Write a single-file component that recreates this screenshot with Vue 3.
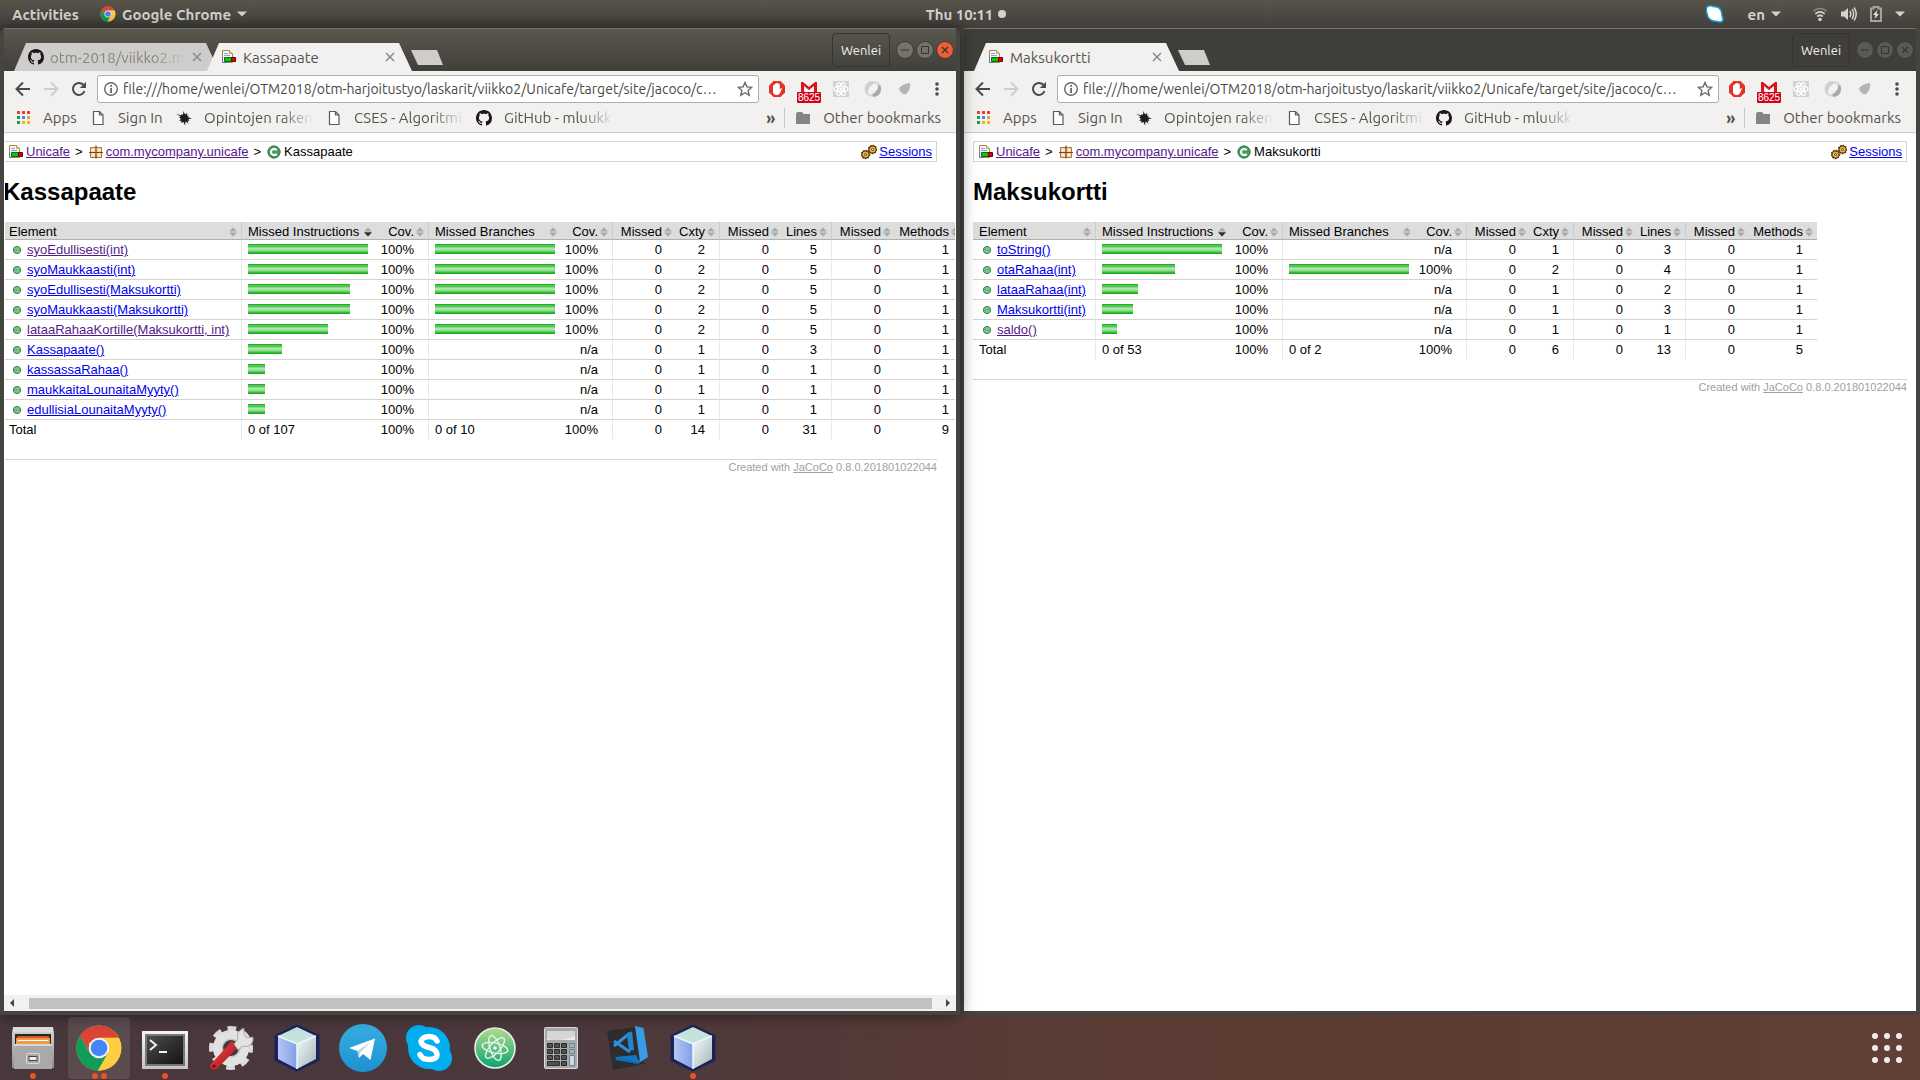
<script setup>
const columns = [
  { label: 'Element', kind: 'name' },
  { label: 'Missed Instructions', kind: 'bar', sorted: true },
  { label: 'Cov.', kind: 'num' },
  { label: 'Missed Branches', kind: 'bar' },
  { label: 'Cov.', kind: 'num' },
  { label: 'Missed', kind: 'num lead' },
  { label: 'Cxty', kind: 'num' },
  { label: 'Missed', kind: 'num lead' },
  { label: 'Lines', kind: 'num' },
  { label: 'Missed', kind: 'num lead' },
  { label: 'Methods', kind: 'num' },
]
const colClasses = ['bar-a', 'cov-a', 'bar-b', 'cov-b', 'missed', 'cxty', 'missed', 'lines', 'missed', 'methods']

// name, visited, instruction bar, branch bar, complexity, lines
const row = (name, visited, ins, br, cxty, lines) => ({
  name, visited, ins, br, cells: [br ? '100%' : 'n/a', 0, cxty, 0, lines, 0, 1],
})

const windows = [
  {
    title: 'Kassapaate',
    focused: true,
    scrolled: true,
    tabs: [
      { title: 'otm-2018/viikko2.m', icon: 'github', active: false },
      { title: 'Kassapaate', icon: 'report', active: true },
    ],
    rows: [
      row('syoEdullisesti(int)', true, 120, 120, 2, 5),
      row('syoMaukkaasti(int)', false, 120, 120, 2, 5),
      row('syoEdullisesti(Maksukortti)', false, 102, 120, 2, 5),
      row('syoMaukkaasti(Maksukortti)', false, 102, 120, 2, 5),
      row('lataaRahaaKortille(Maksukortti, int)', true, 80, 120, 2, 5),
      row('Kassapaate()', false, 34, 0, 1, 3),
      row('kassassaRahaa()', false, 17, 0, 1, 1),
      row('maukkaitaLounaitaMyyty()', false, 17, 0, 1, 1),
      row('edullisiaLounaitaMyyty()', false, 17, 0, 1, 1),
    ],
    total: ['0 of 107', '100%', '0 of 10', '100%', 0, 14, 0, 31, 0, 9],
  },
  {
    title: 'Maksukortti',
    focused: false,
    scrolled: false,
    tabs: [{ title: 'Maksukortti', icon: 'report', active: true }],
    rows: [
      row('toString()', false, 120, 0, 1, 3),
      row('otaRahaa(int)', false, 73, 120, 2, 4),
      row('lataaRahaa(int)', false, 36, 0, 1, 2),
      row('Maksukortti(int)', false, 31, 0, 1, 3),
      row('saldo()', true, 15, 0, 1, 1),
    ],
    total: ['0 of 53', '100%', '0 of 2', '100%', 0, 6, 0, 13, 0, 5],
  },
]

const url = 'file:///home/wenlei/OTM2018/otm-harjoitustyo/laskarit/viikko2/Unicafe/target/site/jacoco/c…'
const bookmarks = [
  { label: 'Apps', icon: 'apps', size: 'tiny' },
  { label: 'Sign In', icon: 'file', size: 'short' },
  { label: 'Opintojen raken', icon: 'splat', size: 'long' },
  { label: 'CSES - Algoritmi', icon: 'file', size: 'long' },
  { label: 'GitHub - mluukk', icon: 'github', size: 'long' },
]
const extensions = ['adblock', 'gmail', 'react', 'swirl', 'blob', 'kebab']
const dock = [
  { name: 'Files', icon: 'd-files', dots: 1 },
  { name: 'Google Chrome', icon: 'chrome', dots: 2, active: true },
  { name: 'Terminal', icon: 'd-terminal', dots: 1 },
  { name: 'Settings', icon: 'd-tools', dots: 0 },
  { name: 'NetBeans', icon: 'd-cube', dots: 0 },
  { name: 'Telegram', icon: 'd-telegram', dots: 0 },
  { name: 'Skype', icon: 'd-skype', dots: 0 },
  { name: 'Atom', icon: 'd-atom', dots: 0 },
  { name: 'Calculator', icon: 'd-calc', dots: 0 },
  { name: 'Visual Studio Code', icon: 'd-code', dots: 0 },
  { name: 'NetBeans IDE', icon: 'd-cube', dots: 1 },
]
</script>

<template>
  <div class="desktop">
    <svg class="defs" width="0" height="0" aria-hidden="true">
      <defs>
        <linearGradient id="g-silver" x1="0" y1="0" x2="0" y2="1"><stop offset="0" stop-color="#d8d8d8" /><stop offset="1" stop-color="#8e8e8e" /></linearGradient>
        <linearGradient id="g-light" x1="0" y1="0" x2="0" y2="1"><stop offset="0" stop-color="#f4f4f4" /><stop offset="1" stop-color="#c4c4c4" /></linearGradient>
        <linearGradient id="g-screen" x1="0" y1="0" x2="1" y2="1"><stop offset="0" stop-color="#4c4c4c" /><stop offset="1" stop-color="#141414" /></linearGradient>
        <linearGradient id="g-tele" x1="0" y1="0" x2="0" y2="1"><stop offset="0" stop-color="#37aee2" /><stop offset="1" stop-color="#1e91d0" /></linearGradient>
        <linearGradient id="g-atom" x1="0" y1="0" x2="0" y2="1"><stop offset="0" stop-color="#b5dc8c" /><stop offset="1" stop-color="#0aa371" /></linearGradient>
        <linearGradient id="g-cl" x1="0" y1="0" x2="1" y2="0"><stop offset="0" stop-color="#b4c6f5" /><stop offset="1" stop-color="#829fe6" /></linearGradient>
        <linearGradient id="g-cr" x1="0" y1="0" x2="1" y2="1"><stop offset="0" stop-color="#f2fafc" /><stop offset="1" stop-color="#a5b5b5" /></linearGradient>
        <linearGradient id="g-red" x1="0" y1="0" x2="1" y2="1"><stop offset="0" stop-color="#ee4c4c" /><stop offset="1" stop-color="#a30e14" /></linearGradient>
      </defs>
      <symbol id="chrome" viewBox="0 0 48 48">
        <circle cx="24" cy="24" r="22.5" fill="#ffcd40" />
        <path d="M24 24 4.5 12.8A22.5 22.5 0 0 1 43.6 13.4L24 13.8Z" fill="#db4437" />
        <path d="M4.5 12.8A22.5 22.5 0 0 0 23 46.5L33 29.2 24 24 15 29.2 5.5 12Z" fill="#0f9d58" />
        <path d="M5.2 11.8 15 29 14 18 24 13.8H43.6A22.5 22.5 0 0 0 5.2 11.8Z" fill="#db4437" />
        <path d="M33 29.2 23 46.5A22.5 22.5 0 0 0 43.6 13.8H24Z" fill="#ffcd40" />
        <circle cx="24" cy="24" r="10.3" fill="#f1f1f1" /><circle cx="24" cy="24" r="8.3" fill="#4285f4" />
      </symbol>
      <symbol id="github" viewBox="0 0 16 16"><path fill="#1b1817" d="M8 0C3.58 0 0 3.58 0 8c0 3.54 2.29 6.53 5.47 7.59.4.07.55-.17.55-.38 0-.19-.01-.82-.01-1.49-2.01.37-2.53-.49-2.69-.94-.09-.23-.48-.94-.82-1.13-.28-.15-.68-.52-.01-.53.63-.01 1.08.58 1.23.82.72 1.21 1.87.87 2.33.66.07-.52.28-.87.51-1.07-1.78-.2-3.64-.89-3.64-3.95 0-.87.31-1.59.82-2.15-.08-.2-.36-1.02.08-2.12 0 0 .67-.21 2.2.82.64-.18 1.32-.27 2-.27s1.36.09 2 .27c1.53-1.04 2.2-.82 2.2-.82.44 1.1.16 1.92.08 2.12.51.56.82 1.27.82 2.15 0 3.07-1.87 3.75-3.65 3.95.29.25.54.73.54 1.48 0 1.07-.01 1.93-.01 2.2 0 .21.15.46.55.38A8.01 8.01 0 0 0 16 8c0-4.42-3.58-8-8-8Z" /></symbol>
      <symbol id="report" viewBox="0 0 16 16">
        <path d="M1.5 1.5h7l3 3v9h-10z" fill="#f4f6fb" stroke="#b08a3a" /><path d="M8.5 1.5v3h3" fill="#f0d58a" stroke="#c9a24c" />
        <path d="M3 4.5h4M3 6.5h6" stroke="#8aa2d4" /><path d="M1.5 8v5.5h4" stroke="#66749b" fill="none" />
        <path d="M3.500 8.500h7v4h-7z" fill="#12c212" stroke="#0a6b0a" /><path d="M10.500 8.500h4v4h-4z" fill="#c40c0c" stroke="#700" />
      </symbol>
      <symbol id="package" viewBox="0 0 16 16"><path d="M2.500 3.500h11v10h-11z" fill="#f3d6a6" stroke="#b5733c" /><path d="M8 1.500v13M1 8.500h14" stroke="#7c4323" stroke-width="1.200" /><path d="M4 5h2.500v2H4zM10 5h2.500v2H10zM4 10h2.500v2H4zM10 10h2.500v2H10z" fill="#fbeeda" /></symbol>
      <symbol id="class" viewBox="0 0 16 16"><circle cx="8" cy="8" r="6.500" fill="#4c9c62" /><circle cx="8" cy="8" r="6" fill="none" stroke="#2f7d48" /><path d="M10.600 6.200A3.100 3.100 0 1 0 10.600 9.800" fill="none" stroke="#fff" stroke-width="2" /></symbol>
      <symbol id="sessions" viewBox="0 0 16 16">
        <g fill="#e9b545" stroke="#5a3408" stroke-width="1.200"><circle cx="4.500" cy="10.500" r="3.600" /><circle cx="11.500" cy="5.500" r="3.600" /></g>
        <g fill="none" stroke="#5a3408" stroke-width="1.200" stroke-dasharray="1.300 1.500"><circle cx="4.500" cy="10.500" r="4.200" /><circle cx="11.500" cy="5.500" r="4.200" /></g>
        <g fill="#fff4c8" stroke="#5a3408"><circle cx="4.500" cy="10.500" r="1" /><circle cx="11.500" cy="5.500" r="1" /></g>
      </symbol>
      <symbol id="method" viewBox="0 0 16 16"><circle cx="8" cy="8" r="3.600" fill="#86c486" stroke="#2f8156" /><path d="M5.500 8h5" stroke="#5fab6c" /></symbol>
      <symbol id="sort" viewBox="0 0 8 10"><path d="M4 .5 8 4.500H0z" fill="#a9a9a9" /><path d="M4 9.500 8 5.500H0z" fill="#a9a9a9" /></symbol>
      <symbol id="sort-down" viewBox="0 0 8 10"><path d="M4 .5 8 4.500H0z" fill="#a9a9a9" /><path d="M4 9.500 8 5.200H0z" fill="#3a2a20" /></symbol>
      <symbol id="apps" viewBox="0 0 16 16">
        <path d="M2 1h3v3H2zM7 1h3v3H7zM12 1h3v3h-3z" fill="#ee3e36" /><path d="M2 6h3v3H2z" fill="#16a05d" /><path d="M7 6h3v3H7z" fill="#4285f4" /><path d="M12 6h3v3h-3z" fill="#fa9d1c" />
        <path d="M2 11h3v3H2z" fill="#16a05d" /><path d="M7 11h3v3H7zM12 11h3v3h-3z" fill="#f8b21c" />
      </symbol>
      <symbol id="file" viewBox="0 0 16 16"><path d="M3.500 1.500h6l3.500 3.500v9.500H3.500zM9.500 1.500V5H13" fill="#fff" stroke="#5a5a5a" stroke-width="1.200" /></symbol>
      <symbol id="splat" viewBox="0 0 16 16"><path fill="#1d1d1d" d="m0 3.500 5 2L5.500 4 7 5l.5-4L9 4.500 11.500 3l-.5 2.500 2 .5-1.500 1L16 8.500l-3.500.5 1 2-2-.5 1 3-3-2-.5 4L7.500 12 5 13l.5-2L3 10.500l2-1.500-2-2 1.500-.5z" /></symbol>
      <symbol id="folder" viewBox="0 0 16 16"><path d="M1 3.500 2.500 2H7l1.500 2H15v10H1z" fill="#858585" /></symbol>
      <symbol id="back" viewBox="0 0 16 16"><path d="M15 8H2M8 1.500 1.500 8 8 14.500" fill="none" stroke="#4a4a4a" stroke-width="2" /></symbol>
      <symbol id="forward" viewBox="0 0 16 16"><path d="M1 8h13M8 1.500 14.500 8 8 14.500" fill="none" stroke="#cfcdcb" stroke-width="2" /></symbol>
      <symbol id="reload" viewBox="0 0 16 16"><path d="M13.500 10.200A6 6 0 1 1 12.300 3.800" fill="none" stroke="#4a4a4a" stroke-width="2" /><path d="M15 .8V7H8.800z" fill="#4a4a4a" /></symbol>
      <symbol id="info" viewBox="0 0 16 16"><circle cx="8" cy="8" r="6.300" fill="none" stroke="#6a6a6a" stroke-width="1.400" /><path d="M7.200 4h1.800v1.800H7.200zM7.200 7h1.800v5H7.200z" fill="#6a6a6a" /></symbol>
      <symbol id="star" viewBox="0 0 16 16"><path d="m8 1.500 1.900 4.400 4.800.4-3.600 3.200 1.100 4.700L8 11.700l-4.200 2.500 1.100-4.700L1.300 6.300l4.800-.4z" fill="none" stroke="#6a6a6a" stroke-width="1.400" /></symbol>
      <symbol id="adblock" viewBox="0 0 24 24"><path d="M8.500 4h7L20 8.500v7L15.500 20h-7L4 15.500v-7z" fill="#e4312c" /><path d="M8 12V8.500q.8-1 1.500 0V7q.9-1 1.700 0V6.200q.9-1 1.800 0V7q1-1 1.700 0v5.500l1.300-1.500q1 0 .8 1l-2 4.500q-1 1.500-3.500 1.500-3 0-3.300-3z" fill="#fff" /></symbol>
      <symbol id="gmail" viewBox="0 0 24 24"><path d="M4 5h16v10H4z" fill="#f6eeee" /><path d="M4 15V5h2l6 5 6-5h2v10h-3V9l-5 4-5-4v6z" fill="#d4151b" /></symbol>
      <symbol id="react" viewBox="0 0 24 24"><path d="M4 4h16v16H4z" fill="#d3d2d0" /><g fill="none" stroke="#fff" stroke-width="1.200"><ellipse cx="12" cy="12" rx="7" ry="2.800" /><ellipse cx="12" cy="12" rx="7" ry="2.800" transform="rotate(60 12 12)" /><ellipse cx="12" cy="12" rx="7" ry="2.800" transform="rotate(120 12 12)" /></g><circle cx="12" cy="12" r="1.500" fill="#fff" /></symbol>
      <symbol id="swirl" viewBox="0 0 24 24"><path d="M12 4a8 8 0 0 0-4 15q-2-5 0-8t6-5q-2 0-2-2z" fill="#cfcfcf" /><path d="M12 20a8 8 0 0 0 4-15q2 5 0 8t-6 5q2 0 2 2z" fill="#a9a9a9" /><path d="M13 4q6 1 7 7-3-5-8-5 1-1 1-2zM4 13q1 6 8 7-1-2 0-2-5 0-8-5z" fill="#d6d6d6" /></symbol>
      <symbol id="blob" viewBox="0 0 24 24"><path d="M6 11q3-4 11-5 1 7-4 11-2 1-4-1-3-2-3-5z" fill="#b7b5b3" /></symbol>
      <symbol id="kebab" viewBox="0 0 24 24"><g fill="#4a4a4a"><circle cx="12" cy="7" r="1.800" /><circle cx="12" cy="12" r="1.800" /><circle cx="12" cy="17" r="1.800" /></g></symbol>
      <symbol id="min" viewBox="0 0 18 18"><path d="M5 9h8" stroke="currentColor" /></symbol>
      <symbol id="max" viewBox="0 0 18 18"><path d="M5.500 5.500h7v7h-7z" fill="none" stroke="currentColor" /></symbol>
      <symbol id="close" viewBox="0 0 18 18"><path d="m6 6 6 6M12 6l-6 6" stroke="currentColor" stroke-width="1.200" /></symbol>
      <symbol id="tab-close" viewBox="0 0 10 10"><path d="m1 1 8 8M9 1 1 9" stroke="#8a8988" stroke-width="1.500" /></symbol>
      <symbol id="tri" viewBox="0 0 10 6"><path d="M0 .5h10L5 5.500z" fill="#d5d3cf" /></symbol>
      <symbol id="tray-skype" viewBox="0 0 18 18"><path d="M1.500 1.500q3-1.500 5.500 0 8-.5 9 7.500 0 1 0 2 2 3.500 0 5.500-2.500 1-4.500 0-9.500 0-10.500-8Q-.8 4 1.500 1.500z" fill="#fff" stroke="#139cd8" stroke-width="1.600" /></symbol>
      <symbol id="wifi" viewBox="0 0 16 16"><g fill="none" stroke="#d5d3cf" stroke-width="1.700"><path d="M1.500 5q6.500-5 13 0" stroke="#8c8a85" /><path d="M3.300 7.800q4.700-4 9.400 0M5.200 10.500q2.800-2.500 5.600 0" /></g><circle cx="8" cy="13.500" r="1.800" fill="#d5d3cf" /></symbol>
      <symbol id="volume" viewBox="0 0 16 16"><path d="M0 5.500h3L7 2v12l-4-3.500H0z" fill="#d5d3cf" /><path d="M8.800 5q2 3 0 6M11 3.200q3.300 4.800 0 9.600M13 1.500q4.500 6.500 0 13" fill="none" stroke="#d5d3cf" stroke-width="1.500" /></symbol>
      <symbol id="battery" viewBox="0 0 12 16"><path d="M1 2.500h2.500V1h5v1.500H11V15H1z" fill="none" stroke="#a5a39e" stroke-width="2" /><path d="M7.500 4 3 9h2.500L4.500 13 9 8H6.500z" fill="#e8e6e2" /></symbol>

      <symbol id="d-files" viewBox="0 0 48 48">
        <path d="M4 3h40l1 6v35H3V9z" fill="url(#g-silver)" /><path d="M4 3h40v5H4z" fill="#dedede" /><path d="M6 10h36v10H6z" fill="#262626" />
        <path d="M8 12h32v8H8z" fill="#d2571c" /><path d="M7 14h34v6H7z" fill="#f09a4a" /><path d="M9 16h30v1H9z" fill="#fff" /><path d="M5 20h38v25H5z" fill="#a9a9a9" /><path d="M5 20h38v2H5z" fill="#d8d8d8" />
        <rect x="17.500" y="29.500" width="13" height="10" rx="1" fill="#a8a8a8" stroke="#dcdcdc" /><path d="M20 32.500h8v4h-8z" fill="#f0f0f0" stroke="#444" />
      </symbol>
      <symbol id="d-terminal" viewBox="0 0 48 48"><path d="M1 7h46v38H1z" fill="url(#g-light)" /><path d="M4 10h40v32H4z" fill="#777" /><path d="M6 12h36v28H6z" fill="url(#g-screen)" /><path d="m9 16 6 5-6 5M18 28h8" stroke="#f4f4f4" stroke-width="2" fill="none" /></symbol>
      <symbol id="d-tools" viewBox="0 0 48 48">
        <circle cx="24" cy="24" r="19" fill="none" stroke="#dcdcdc" stroke-width="6" stroke-dasharray="8.500 6.423" stroke-dashoffset="4" /><circle cx="24" cy="24" r="13" fill="none" stroke="#e2e2e2" stroke-width="10" /><circle cx="24" cy="24" r="9" fill="none" stroke="#bdbdbd" />
        <path d="m4 40 21-23 6 6L10 45q-4 2-6-1t0-4z" fill="url(#g-red)" /><circle cx="7" cy="42" r="1.500" fill="#600" /><path d="m27 20 4-5q-2-7 4-10l2-1v6l3 4 6-1q1 7-5 9-3 1-5 0l-5 4z" fill="#e4e4e4" stroke="#9a9a9a" stroke-width=".8" />
      </symbol>
      <symbol id="d-cube" viewBox="0 0 48 48"><path d="M24 2 45 12v24L24 46 3 36V12z" fill="#232353" stroke="#1c2358" stroke-width="3" stroke-linejoin="round" /><path d="M24 3 43 12 24 20 5 12z" fill="#c6e2dc" /><path d="M5 12 24 20V45L5 35z" fill="url(#g-cl)" /><path d="M43 12 24 20V45l19-10z" fill="url(#g-cr)" /><path d="M5 12 24 20l19-8M24 20v25" stroke="#eef8fb" stroke-width="1.500" fill="none" /></symbol>
      <symbol id="d-telegram" viewBox="0 0 48 48"><circle cx="24" cy="24" r="24" fill="url(#g-tele)" /><path d="M10 24 36 14.500 31.500 36 24 30l-4 4-1.500-7z" fill="#fff" /><path d="m18.500 27 13-9L21 28.500 20 34z" fill="#b8d0e2" /></symbol>
      <symbol id="d-skype" viewBox="0 0 48 48"><circle cx="24" cy="24" r="21" fill="#00aff0" /><circle cx="14" cy="14" r="13" fill="#00aff0" /><circle cx="34" cy="34" r="13" fill="#00aff0" /><path d="M32 17q-2-4.500-8-4.500T16 17q0 4.500 8 6.500T32 30.500q0 5-8 5-7 0-9-5" fill="none" stroke="#fff" stroke-width="5.500" stroke-linecap="round" /></symbol>
      <symbol id="d-atom" viewBox="0 0 48 48"><circle cx="24" cy="24" r="20" fill="url(#g-atom)" stroke="#eaf0ea" stroke-width="1.600" /><g fill="none" stroke="#e6f5ea" stroke-width="1.400"><ellipse cx="24" cy="24" rx="13" ry="5" transform="rotate(12 24 24)" /><ellipse cx="24" cy="24" rx="13" ry="5" transform="rotate(72 24 24)" /><ellipse cx="24" cy="24" rx="13" ry="5" transform="rotate(132 24 24)" /></g><circle cx="24" cy="24" r="1.800" fill="#fff" /></symbol>
      <symbol id="d-calc" viewBox="0 0 48 48">
        <rect x="7.500" y="3.500" width="33" height="41" rx="1" fill="#a9a9a9" stroke="#dcdcdc" /><path d="M10 7h28v9H10z" fill="#ececec" /><path d="M10 7h28v5q-14 6-28 3z" fill="#d6d6d6" />
        <g fill="#4f524e" stroke="#2a2c2a"><path d="M10.500 19.500h5v4h-5zM17.500 19.500h5v4h-5zM24.500 19.500h5v4h-5zM10.500 25.500h5v4h-5zM17.500 25.500h5v4h-5zM24.500 25.500h5v4h-5zM10.500 31.500h5v4h-5zM17.500 31.500h5v4h-5zM24.500 31.500h5v4h-5zM10.500 37.500h12v4h-12zM24.500 37.500h5v4h-5z" /></g>
        <g fill="#9db4c4" stroke="#6d8494"><path d="M32.500 19.500h5v4h-5zM32.500 25.500h5v4h-5z" /><path d="M32.500 31.500h5v10h-5z" fill="#cfd9e0" /></g>
      </symbol>
      <symbol id="d-code" viewBox="0 0 48 48"><path d="m4 7 28-4 9 37-31 6z" fill="#2d2d2f" /><path d="m12 33 24 3 9-3-3 2-7 5-22-4z" fill="#0f6db8" /><path d="m12 33 21-2 3 7z" fill="#1177c4" /><path d="m32 2 8.500 2L45 33l-8 5z" fill="#3a9ce4" /><path d="M11 17 27 28M27 9 11 22" fill="none" stroke="#2f8fd8" stroke-width="3" /><path d="m24 11 5-4 2 19-5 1z" fill="#2384d0" /></symbol>
    </svg>

    <header class="panel">
      <div class="panel-side">
        <button class="panel-btn activities">Activities</button>
        <button class="panel-btn app-menu"><svg class="i16"><use href="#chrome" /></svg><span>Google Chrome</span><svg class="tri"><use href="#tri" /></svg></button>
      </div>
      <button class="panel-btn clock">Thu 10:11<i class="notice"></i></button>
      <div class="panel-side tray">
        <svg class="i18"><use href="#tray-skype" /></svg>
        <button class="panel-btn lang"><span>en</span><svg class="tri"><use href="#tri" /></svg></button>
        <button class="panel-btn status" aria-label="System menu">
          <svg class="i16"><use href="#wifi" /></svg><svg class="i16"><use href="#volume" /></svg><svg class="battery"><use href="#battery" /></svg><svg class="tri"><use href="#tri" /></svg>
        </button>
      </div>
    </header>

    <main class="windows">
      <section v-for="w in windows" :key="w.title" class="window" :class="{ focused: w.focused }">
        <div class="titlebar">
          <div class="tabs">
            <div v-for="t in w.tabs" :key="t.title" class="tab" :class="{ active: t.active }">
              <svg class="i16"><use :href="'#' + t.icon" /></svg>
              <span class="tab-title" :class="{ fade: !t.active }">{{ t.title }}</span>
              <button class="tab-x" aria-label="Close tab"><svg class="i10"><use href="#tab-close" /></svg></button>
            </div>
            <button class="new-tab" aria-label="New tab"></button>
          </div>
          <button class="profile">Wenlei</button>
          <div class="controls">
            <button v-for="c in ['min', 'max', 'close']" :key="c" class="ctl" :class="c" :aria-label="c"><svg class="i18"><use :href="'#' + c" /></svg></button>
          </div>
        </div>

        <div class="toolbar">
          <button v-for="n in ['back', 'forward', 'reload']" :key="n" class="tool" :aria-label="n"><svg class="i16"><use :href="'#' + n" /></svg></button>
          <label class="address">
            <svg class="i16"><use href="#info" /></svg>
            <input type="text" :value="url" aria-label="Address" readonly />
            <svg class="i16"><use href="#star" /></svg>
          </label>
          <button v-for="e in extensions" :key="e" class="ext" :aria-label="e">
            <svg class="i24"><use :href="'#' + e" /></svg><span v-if="e === 'gmail'" class="badge">8625</span>
          </button>
        </div>

        <nav class="bookmarks" aria-label="Bookmarks">
          <a v-for="b in bookmarks" :key="b.label" href="#" class="bookmark"><svg class="i16"><use :href="'#' + b.icon" /></svg><span :class="b.size">{{ b.label }}</span></a>
          <button class="more">»</button>
          <a href="#" class="bookmark other"><svg class="i16"><use href="#folder" /></svg><span>Other bookmarks</span></a>
        </nav>

        <div class="viewport">
          <article class="doc" :class="{ scrolled: w.scrolled }">
            <div class="breadcrumb">
              <div class="trail">
                <a href="#" class="visited el"><svg class="i16"><use href="#report" /></svg>Unicafe</a><span>&gt;</span>
                <a href="#" class="visited el"><svg class="i16"><use href="#package" /></svg>com.mycompany.unicafe</a><span>&gt;</span>
                <span class="el"><svg class="i16"><use href="#class" /></svg>{{ w.title }}</span>
              </div>
              <a href="#" class="el"><svg class="i16"><use href="#sessions" /></svg>Sessions</a>
            </div>
            <h1>{{ w.title }}</h1>
            <table class="coverage" :class="{ wide: w.scrolled }">
              <colgroup><col class="element" /><col v-for="(c, i) in colClasses" :key="i" :class="c" /></colgroup>
              <thead>
                <tr>
                  <th v-for="(c, i) in columns" :key="i" :class="c.kind" scope="col"><button><span>{{ c.label }}</span><svg class="sort"><use :href="c.sorted ? '#sort-down' : '#sort'" /></svg></button></th>
                </tr>
              </thead>
              <tbody>
                <tr v-for="r in w.rows" :key="r.name">
                  <td><a href="#" class="el method" :class="{ visited: r.visited }"><svg class="i16"><use href="#method" /></svg>{{ r.name }}</a></td>
                  <td class="bar"><div class="meter" :style="{ width: r.ins + 'px' }"></div></td>
                  <td class="num">100%</td>
                  <td class="bar"><div v-if="r.br" class="meter" :style="{ width: r.br + 'px' }"></div></td>
                  <td v-for="(v, i) in r.cells" :key="i" :class="columns[i + 4].kind">{{ v }}</td>
                </tr>
              </tbody>
              <tfoot>
                <tr><td>Total</td><td v-for="(v, i) in w.total" :key="i" :class="columns[i + 1].kind">{{ v }}</td></tr>
              </tfoot>
            </table>
            <footer>Created with <a href="#">JaCoCo</a> 0.8.0.201801022044</footer>
          </article>
        </div>
        <div v-if="w.scrolled" class="scrollbar"><i class="arrow left"></i><i class="thumb"></i><i class="arrow right"></i></div>
      </section>
    </main>

    <footer class="dock">
      <button v-for="d in dock" :key="d.name" class="launcher" :class="{ active: d.active }" :aria-label="d.name">
        <svg class="i48"><use :href="'#' + d.icon" /></svg><span class="dots"><i v-for="n in d.dots" :key="n"></i></span>
      </button>
      <button class="show-apps" aria-label="Show applications"><i v-for="n in 9" :key="n"></i></button>
    </footer>
  </div>
</template>

<style>
body { margin: 0; background: #48383d; }
</style>

<style scoped>
* { box-sizing: border-box; }
.desktop { display: flex; flex-direction: column; height: 100vh; overflow: hidden; font-family: Ubuntu, "Noto Sans", sans-serif; background: linear-gradient(90deg, #48373c 0%, #4b383c 30%, #583b35 52%, #5c3c31 75%, #623f35 100%); }
.defs { position: absolute; }
button { display: flex; align-items: center; margin: 0; padding: 0; border: 0; background: none; color: inherit; font: inherit; }
svg { display: block; flex: none; }
.i10 { width: 10px; height: 10px; }
.i16 { width: 16px; height: 16px; }
.i18 { width: 18px; height: 18px; }
.i24 { width: 24px; height: 24px; }
.i48 { width: 48px; height: 48px; }
.tri { width: 10px; height: 6px; }

.panel { display: grid; grid-template-columns: 1fr auto 1fr; align-items: center; flex: none; height: 28px; padding: 0 15px 0 12px; background: linear-gradient(#57544b, #403f3a); color: #d5d3cf; font-size: 15px; font-weight: 600; }
.panel-side { display: flex; align-items: center; }
.activities { width: 88px; }
.app-menu { gap: 6px; }
.clock { gap: 5px; padding-left: 15px; }
.notice { width: 8px; height: 8px; border-radius: 50%; background: #d5d3cf; }
.tray { justify-content: flex-end; }
.lang { gap: 6px; margin: 0 31px 0 24px; }
.status { gap: 13px; }
.battery { width: 12px; height: 16px; }

.windows { display: flex; flex: 1; min-height: 0; }
.window { display: flex; flex-direction: column; flex: 1; min-width: 0; border: 4px solid #454440; border-top: 1px solid #74726b; border-radius: 6px 6px 0 0; background: #45443f; }
.window.focused { position: relative; z-index: 1; box-shadow: 0 0 16px rgba(0, 0, 0, .5); }
.titlebar { display: flex; align-items: center; flex: none; height: 42px; padding-right: 2px; background: #3f3e3a; }
.focused .titlebar { background: linear-gradient(#5a574e, #403f3a); }
.tabs { display: flex; align-self: flex-end; flex: 1; min-width: 0; padding-left: 10px; }
.tab { display: flex; align-items: center; width: 205px; height: 28px; padding: 0 17px 0 14px; margin-right: -12px; gap: 6px; background: #cfcdcb; color: #87857f; clip-path: polygon(12px 0, 192px 0, 205px 100%, 0 100%); font-size: 15px; }
.tab.active { background: #f2f1f0; color: #55534f; }
.tab-title { flex: 1; white-space: nowrap; }
.tab-x { height: 16px; }
.fade { mask-image: linear-gradient(90deg, #000 calc(100% - 34px), transparent); }
.new-tab { width: 32px; height: 15px; margin: 7px 0 0 11px; background: #cfcdcb; clip-path: polygon(0 0, 26px 0, 100% 100%, 7px 100%); }
.profile { justify-content: center; width: 58px; height: 34px; margin-right: 6px; border: 1px solid #35342f; border-radius: 4px; color: #f0efec; font-size: 13px; }
.controls { display: flex; gap: 2px; }
.ctl { width: 18px; height: 18px; border: 1px solid #3a3935; border-radius: 50%; background: #5b5954; color: #35342f; justify-content: center; }
.focused .ctl { background: #74726b; }
.focused .ctl.close { background: #ec5e34; }

.toolbar { display: flex; align-items: center; flex: none; height: 36px; padding: 0 3px 0 11px; background: #f2f1f0; }
.tool { width: 28px; height: 28px; }
.address { display: flex; align-items: center; flex: 1; min-width: 0; height: 28px; margin: 0 2px 0 -2px; padding: 0 5px; gap: 4px; border: 1px solid #b0aead; border-radius: 3px; background: #fff; }
.address input { flex: 1; min-width: 0; margin: 0; padding: 0; border: 0; outline: 0; background: none; color: #4a4945; font: 14px Ubuntu, "Noto Sans", sans-serif; }
.ext { position: relative; justify-content: center; width: 32px; height: 28px; }
.badge { position: absolute; left: 4px; bottom: 0; width: 24px; height: 11px; border-radius: 1px; background: #d0021b; color: #fff; font: 10px/11px "Liberation Sans", sans-serif; }
.bookmarks { display: flex; align-items: center; flex: none; gap: 12px; height: 26px; padding: 0 15px 4px 11px; border-bottom: 1px solid #ccc9c6; background: #f2f1f0; color: #55534f; font-size: 15px; line-height: 20px; }
.bookmark { display: flex; align-items: center; gap: 12px; color: inherit; text-decoration: none; white-space: nowrap; }
.tiny { width: 35px; }
.short { width: 46px; }
.long { width: 110px; mask-image: linear-gradient(90deg, #000 70%, transparent); }
.more { margin-left: auto; font-size: 16px; font-weight: 600; }
.other { padding-left: 10px; margin-left: -3px; border-left: 1px solid #c9c7c4; }

.viewport { flex: 1; min-height: 0; overflow: hidden; border: solid #fff; border-width: 0 1px; background: #fff; color: #000; font: 13px/15px "Liberation Sans", Arial, sans-serif; }
.doc { margin: 8px 8px 0; }
.doc.scrolled { margin: 8px 18px 0 -2px; }
.doc a { color: #00e; }
.doc a.visited { color: #551a8b; }
.breadcrumb, .trail { display: flex; align-items: center; }
.breadcrumb { justify-content: space-between; height: 21px; padding: 0 4px; border: 1px solid #d6d3ce; }
.trail { gap: 5px; }
.el { display: inline-flex; align-items: center; gap: 2px; white-space: nowrap; }
h1 { margin: 16px 0; font-size: 24px; line-height: 28px; }
.coverage { width: 844px; table-layout: fixed; border-spacing: 0; }
.coverage.wide { width: 960px; }
.element { width: 122px; }
.wide .element { width: 238px; }
.bar-a { width: 135px; }
.cov-a { width: 52px; }
.bar-b { width: 133px; }
.cov-b { width: 51px; }
.missed { width: 64px; }
.cxty { width: 43px; }
.lines { width: 48px; }
.methods { width: 68px; }
th { height: 18px; padding: 2px 4px 0 0; border-bottom: 1px solid #b0b0b0; background: #ddd; font-weight: 400; text-align: left; white-space: nowrap; }
th button { width: 100%; justify-content: flex-end; gap: 2px; }
th.name, th.bar { padding-left: 6px; }
th.name button, th.bar button { justify-content: space-between; }
th.bar, th.lead { border-left: 1px solid #ccc; }
.sort { width: 8px; height: 10px; }
td { height: 20px; padding: 0 6px; border-bottom: 1px solid #d6d3ce; white-space: nowrap; }
td.bar, td.lead { border-left: 1px solid #e8e8e8; }
tbody td.bar { padding-bottom: 1px; }
td.num { padding: 0 14px 0 0; text-align: right; }
tfoot td { height: 19px; padding-bottom: 1px; border-bottom: 0; }
tfoot td.num { padding-bottom: 1px; }
.method { display: flex; }
.meter { height: 10px; background: linear-gradient(#1fb01f 0 1px, #50c850 1px 3px, #8bda8b 3px 4px, #a8e6a8 4px 6px, #8bda8b 6px 7px, #64d064 7px 8px, #2fbd2f 8px 9px, #1cab1c 9px); }
.doc footer { margin-top: 20px; border-top: 1px solid #d6d3ce; color: #a0a0a0; font-size: 11px; text-align: right; }
.doc footer a { color: inherit; }
.scrollbar { display: flex; align-items: center; justify-content: space-between; flex: none; height: 16px; padding: 0 6px; background: #f1f1f1; }
.thumb { flex: 1; height: 11px; margin: 0 14px 0 15px; background: #c1c1c1; }
.arrow { border: 4px solid transparent; }
.left { border-left: 0; border-right-color: #444; }
.right { border-right: 0; border-left-color: #444; }

.dock { display: flex; align-items: center; flex: none; height: 65px; padding: 0 12px 0 2px; gap: 4px; }
.launcher { position: relative; justify-content: center; width: 62px; height: 62px; border-radius: 4px; }
.launcher.active { background: rgba(255, 255, 255, .1); }
.dots { position: absolute; left: 0; right: 0; bottom: 0; display: flex; justify-content: center; gap: 3px; }
.dots i { width: 6px; height: 6px; border-radius: 50%; background: #e95420; }
.show-apps { display: grid; grid-template-columns: repeat(3, 6px); gap: 6px; margin-left: auto; padding: 6px; }
.show-apps i { width: 6px; height: 6px; border-radius: 50%; background: #eeeeec; }
</style>
